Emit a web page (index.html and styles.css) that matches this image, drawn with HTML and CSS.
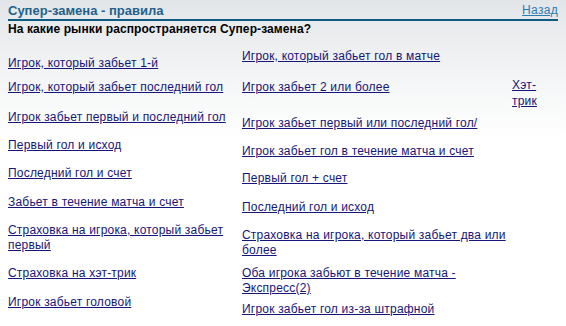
FILE: index.html
```html
<!DOCTYPE html>
<html lang="ru">
<head>
    <meta charset="UTF-8">
    <title>Супер-замена - правила</title>
    <link rel="stylesheet" href="styles.css">
</head>
<body>
<div class="page">
    <div class="title-bar">
        <span class="title">Супер-замена - правила</span>
        <a href="#" class="back">Назад</a>
    </div>

    <h1 class="question">На какие рынки распространяется Супер-замена?</h1>

    <div class="markets">
        <ul class="col col-left">
            <li><a href="#">Игрок, который забьет 1-й</a></li>
            <li class="gap-9"><a href="#">Игрок, который забьет последний гол</a></li>
            <li class="gap-15"><a href="#">Игрок забьет первый и последний гол</a></li>
            <li><a href="#">Первый гол и исход</a></li>
            <li><a href="#">Последний гол и счет</a></li>
            <li class="gap-14"><a href="#">Забьет в течение матча и счет</a></li>
            <li><a href="#">Страховка на игрока, который забьет первый</a></li>
            <li><a href="#">Страховка на хэт-трик</a></li>
            <li class="gap-14"><a href="#">Игрок забьет головой</a></li>
        </ul>

        <ul class="col col-mid">
            <li><a href="#">Игрок, который забьет гол в матче</a></li>
            <li class="gap-16"><a href="#">Игрок забьет 2 или более</a></li>
            <li class="gap-21"><a href="#">Игрок забьет первый или последний гол/</a></li>
            <li><a href="#">Игрок забьет гол в течение матча и счет</a></li>
            <li class="gap-12"><a href="#">Первый гол + счет</a></li>
            <li class="gap-14"><a href="#">Последний гол и исход</a></li>
            <li><a href="#">Страховка на игрока, который забьет два или более</a></li>
            <li class="gap-8"><a href="#">Оба игрока забьют в течение матча - Экспресс(2)</a></li>
            <li class="gap-6"><a href="#">Игрок забьет гол из-за штрафной</a></li>
        </ul>

        <ul class="col col-right">
            <li><a href="#">Хэт-трик</a></li>
        </ul>
    </div>
</div>
</body>
</html>
```

FILE: styles.css
```css
* {
    box-sizing: border-box;
    margin: 0;
    padding: 0;
}

html, body {
    height: 100%;
}

body {
    font-family: "Liberation Sans", Arial, Helvetica, sans-serif;
    font-size: 12px;
    line-height: 15px;
    color: #000;
    background: linear-gradient(to bottom, #e3e6e9 0, #f6f7f8 90px, #fff 140px);
}

.page {
    padding: 3px 8px 0;
}

.title-bar {
    display: flex;
    justify-content: space-between;
    align-items: flex-end;
    border-bottom: 2px solid #0f5b82;
    padding-bottom: 1px;
}

.title {
    font-size: 13px;
    font-weight: bold;
    color: #22618d;
}

.back {
    color: #2b7bb3;
    letter-spacing: 0.3px;
}

.question {
    font-size: 12px;
    font-weight: bold;
    line-height: 15px;
    margin-top: 1px;
    letter-spacing: 0.1px;
}

.markets {
    display: grid;
    grid-template-columns: 234px 270px 40px;
    align-items: start;
}

.col {
    list-style: none;
    letter-spacing: 0.2px;
}

.col li {
    margin-top: 13px;
}

.col-left {
    padding-top: 19px;
    padding-right: 8px;
}

.col-mid {
    padding-top: 12px;
}

.col-mid li:first-child,
.col-left li:first-child {
    margin-top: 0;
}

.col-right {
    padding-top: 27px;
}

.col-right li {
    line-height: 16px;
}

.col a {
    color: #15157a;
}

.col .gap-6 { margin-top: 6px; }
.col .gap-8 { margin-top: 8px; }
.col .gap-9 { margin-top: 9px; }
.col .gap-12 { margin-top: 12px; }
.col .gap-14 { margin-top: 14px; }
.col .gap-15 { margin-top: 15px; }
.col .gap-16 { margin-top: 16px; }
.col .gap-21 { margin-top: 21px; }
```
